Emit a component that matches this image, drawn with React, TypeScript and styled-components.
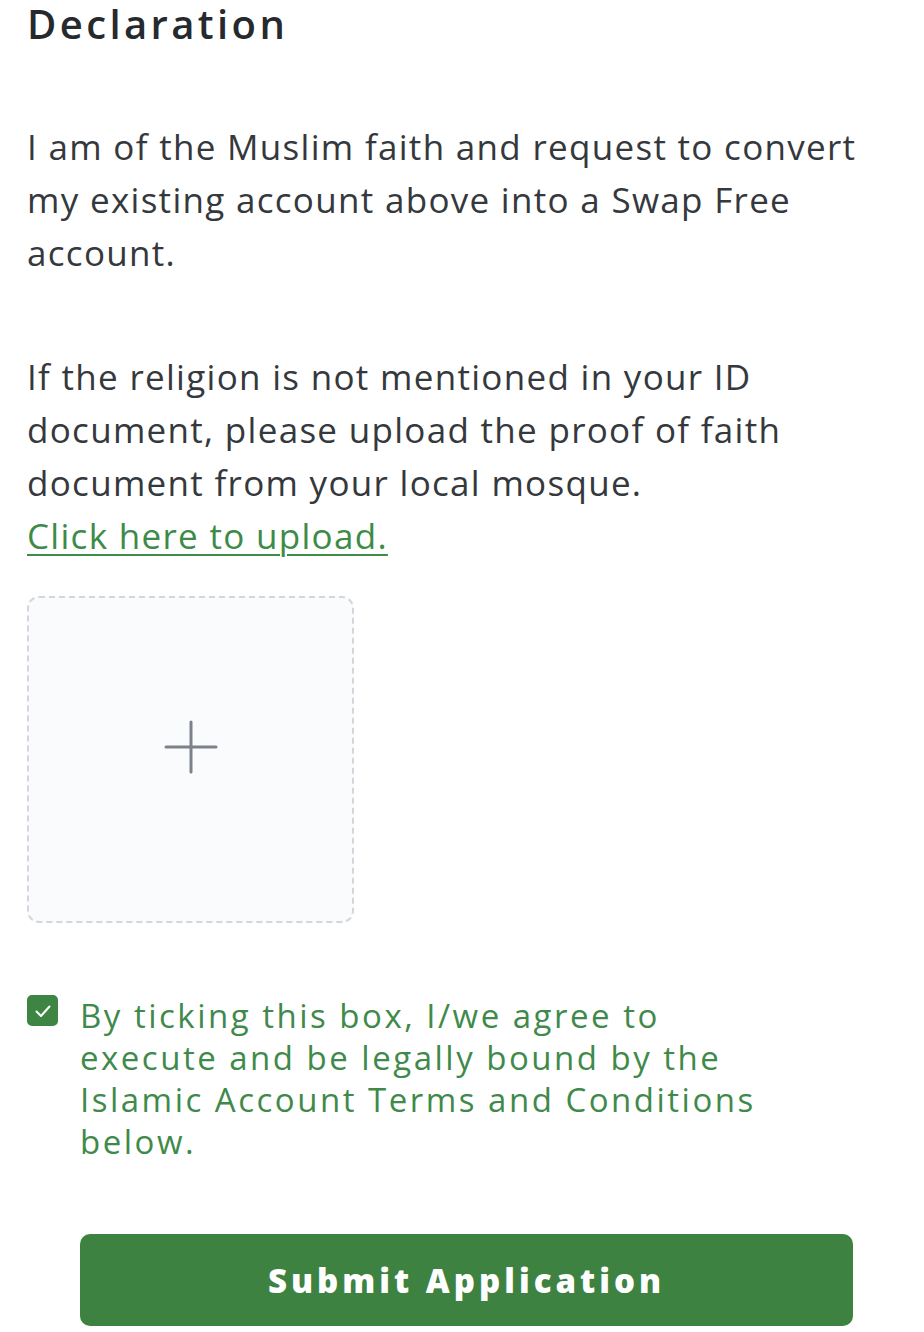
import React, { useState } from 'react';
import styled, { createGlobalStyle } from 'styled-components';

const GlobalStyle = createGlobalStyle`
  html, body {
    margin: 0;
    padding: 0;
    background: #ffffff;
  }
  body {
    font-family: "Open Sans", "DejaVu Sans", sans-serif;
    -webkit-font-smoothing: antialiased;
  }
`;

const Page = styled.main`
  width: 924px;
  min-height: 1332px;
  box-sizing: border-box;
  padding: 0 27px;
  display: flex;
  flex-direction: column;
`;

const Title = styled.h1`
  margin: 0;
  font-size: 40px;
  line-height: 48px;
  font-weight: 600;
  color: #26292e;
  letter-spacing: 3.4px;
`;

const Paragraph = styled.p<{ $gap?: number }>`
  margin: ${p => p.$gap ?? 0}px 0 0 0;
  font-size: 35px;
  line-height: 53px;
  font-weight: 400;
  color: #35383c;
  letter-spacing: 1.3px;
`;

const UploadLink = styled.a`
  display: block;
  font-size: 35px;
  line-height: 53px;
  letter-spacing: 1.3px;
  color: #3d8b48;
  text-decoration: underline;
  text-decoration-thickness: 2px;
  text-underline-offset: 5px;
  cursor: pointer;
`;

const Dropzone = styled.button`
  margin-top: 34px;
  width: 327px;
  height: 327px;
  box-sizing: border-box;
  border: 2px dashed #d3d7dd;
  border-radius: 12px;
  background: #fafbfc;
  display: flex;
  align-items: center;
  justify-content: center;
  padding: 0 0 26px 0;
  cursor: pointer;
`;

const AgreeRow = styled.label`
  margin-top: 72px;
  display: flex;
  align-items: flex-start;
  gap: 22px;
  cursor: pointer;
`;

const Box = styled.span<{ $checked: boolean }>`
  flex: 0 0 auto;
  width: 31px;
  height: 31px;
  margin-top: 0;
  border-radius: 5px;
  box-sizing: border-box;
  background: ${p => (p.$checked ? '#3e8543' : '#ffffff')};
  border: 2px solid #3e8543;
  display: flex;
  align-items: center;
  justify-content: center;
`;

const AgreeText = styled.span`
  font-size: 33px;
  line-height: 42px;
  color: #3f8a4b;
  letter-spacing: 2.5px;
  max-width: 710px;
`;

const SubmitButton = styled.button`
  margin: 71px 0 0 53px;
  width: 773px;
  height: 92px;
  border: none;
  border-radius: 10px;
  background: #3e8242;
  color: #ffffff;
  font-family: "Open Sans", "DejaVu Sans", sans-serif;
  font-size: 33px;
  font-weight: 800;
  letter-spacing: 4px;
  cursor: pointer;
`;

const App: React.FC = () => {
  const [agreed, setAgreed] = useState(true);

  return (
    <>
      <GlobalStyle />
      <Page>
        <Title>Declaration</Title>
        <Paragraph $gap={72}>
          I am of the Muslim faith and request to convert my existing account above into a Swap Free
          account.
        </Paragraph>
        <Paragraph $gap={71}>
          If the religion is not mentioned in your ID document, please upload the proof of faith
          document from your local mosque.
        </Paragraph>
        <UploadLink>Click here to upload.</UploadLink>
        <Dropzone aria-label="Upload document">
          <svg width="54" height="54" viewBox="0 0 54 54" fill="none">
            <path d="M27 2v50M2 27h50" stroke="#7d8189" strokeWidth="3" strokeLinecap="round" />
          </svg>
        </Dropzone>
        <AgreeRow onClick={() => setAgreed(!agreed)}>
          <Box $checked={agreed}>
            {agreed && (
              <svg width="20" height="20" viewBox="0 0 20 20" fill="none">
                <path d="M3.5 10.5l4.5 4.5 8.5-9.5" stroke="#ffffff" strokeWidth="2" strokeLinecap="round" strokeLinejoin="round" />
              </svg>
            )}
          </Box>
          <AgreeText>
            By ticking this box, I/we agree to execute and be legally bound by the Islamic Account
            Terms and Conditions below.
          </AgreeText>
        </AgreeRow>
        <SubmitButton>Submit Application</SubmitButton>
      </Page>
    </>
  );
};

export default App;
